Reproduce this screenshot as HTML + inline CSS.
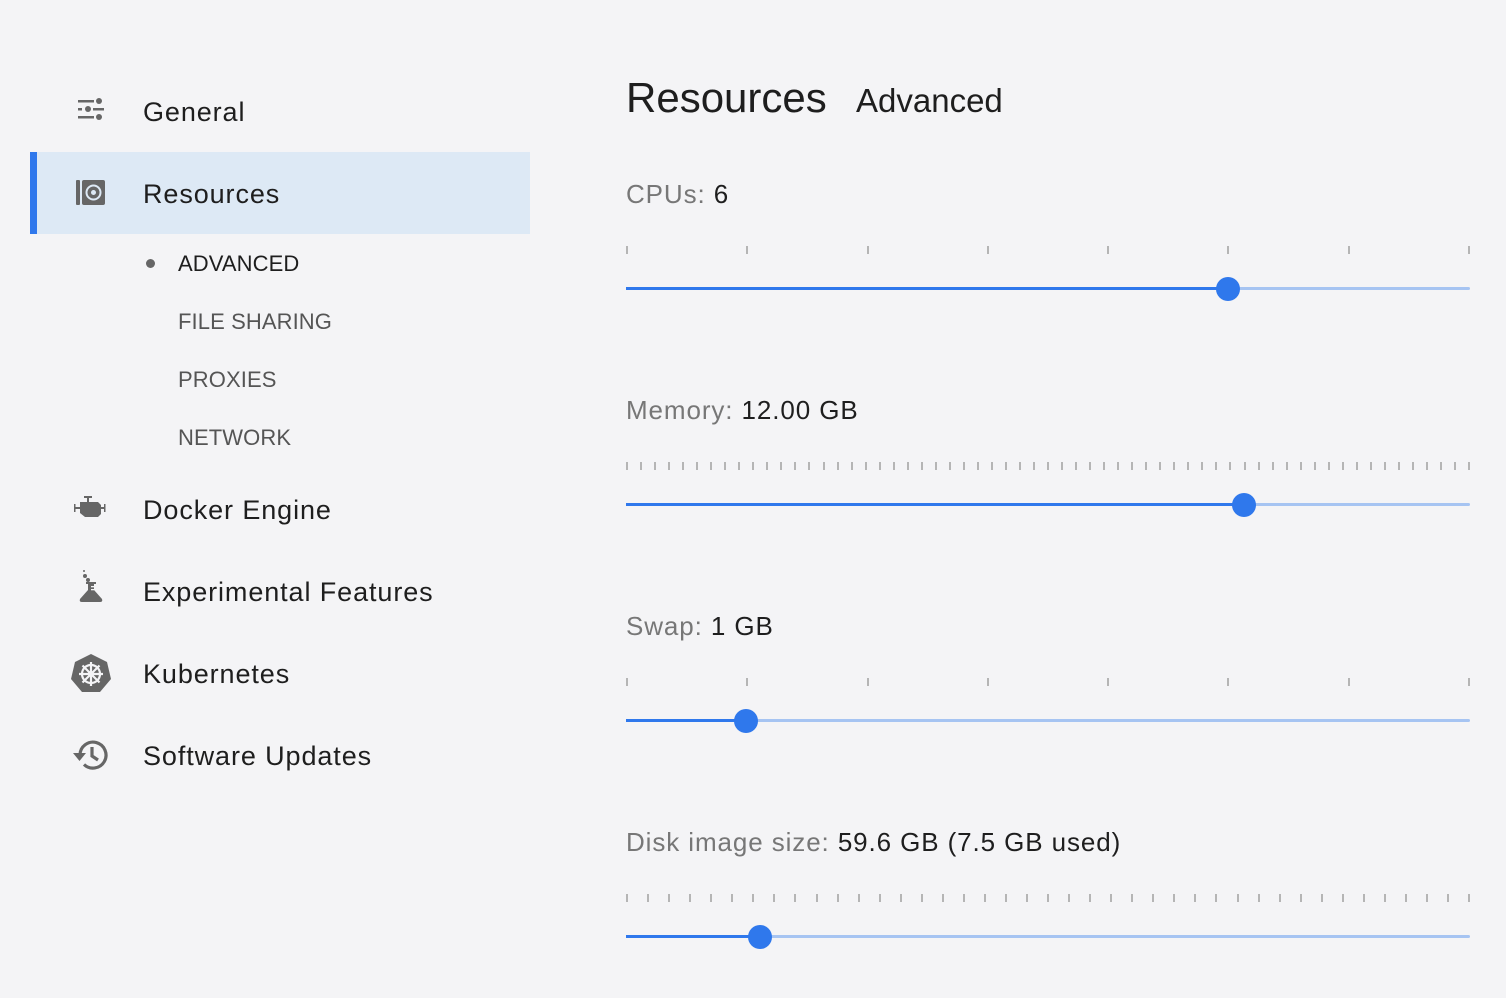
<!DOCTYPE html>
<html><head><meta charset="utf-8"><style>
body{margin:0;width:1506px;height:998px;background:#f4f4f6;font-family:"Liberation Sans",sans-serif;position:relative;overflow:hidden;color:#1e1e1e}
.a{position:absolute;white-space:nowrap}
.nav{font-size:27px;left:143px;letter-spacing:0.9px}
.sub{font-size:22px;left:178px;color:#555;letter-spacing:0.1px}
.lbl{font-size:26px;left:626px;color:#777;letter-spacing:0.9px}
.lbl b{font-weight:normal;color:#1e1e1e}
.trk{position:absolute;left:626px;width:844px;height:3px;background:#a6c4f2;border-radius:2px}
.fill{position:absolute;left:0;top:0;height:3px;background:#2f78ec}
.th{position:absolute;width:24px;height:24px;border-radius:50%;background:#2f78ec;top:-10px;margin-left:-12px}
.tk{position:absolute;width:2px;height:8px;background:#b5b5b5}
svg{position:absolute}
</style></head><body>
<div class="a" style="left:30px;top:152px;width:500px;height:82px;background:#dde9f5"></div>
<div class="a" style="left:30px;top:152px;width:7px;height:82px;background:#2f78ec"></div>

<svg style="left:78px;top:98px" width="28" height="24" viewBox="0 0 28 24"><g fill="#666"><rect x="0" y="2" width="16" height="2.5"/><circle cx="21" cy="3" r="3"/><rect x="0" y="10" width="4" height="2.5"/><circle cx="10" cy="11" r="3"/><rect x="15" y="10" width="11" height="2.5"/><rect x="0" y="18" width="16" height="2.5"/><circle cx="21" cy="19" r="3"/></g></svg>
<div class="a nav" style="top:97px">General</div>

<svg style="left:76px;top:180px" width="30" height="26" viewBox="0 0 30 26"><rect x="0" y="0" width="4" height="25" rx="1" fill="#666"/><rect x="6" y="0" width="23" height="25" rx="2" fill="#666"/><circle cx="17.5" cy="12.5" r="7" fill="none" stroke="#dde9f5" stroke-width="2"/><circle cx="17.5" cy="12.5" r="2.5" fill="#dde9f5"/></svg>
<div class="a nav" style="top:179px">Resources</div>

<div class="a" style="left:146px;top:259px;width:9px;height:9px;border-radius:50%;background:#666"></div>
<div class="a sub" style="top:251px;color:#1e1e1e">ADVANCED</div>
<div class="a sub" style="top:309px">FILE SHARING</div>
<div class="a sub" style="top:367px">PROXIES</div>
<div class="a sub" style="top:425px">NETWORK</div>

<svg style="left:74px;top:496px" width="32" height="24" viewBox="0 0 32 24"><g fill="#666"><rect x="10" y="0" width="8" height="2"/><rect x="13" y="1" width="2" height="5"/><path d="M6 6h18l3 3v9l-3 3H11l-5-4z"/><rect x="0" y="11" width="6" height="2"/><rect x="0" y="8" width="1.5" height="8"/><rect x="27" y="11" width="4" height="2"/><rect x="30" y="8" width="1.5" height="8"/></g></svg>
<div class="a nav" style="top:495px">Docker Engine</div>

<svg style="left:76px;top:568px" width="30" height="36" viewBox="0 0 30 36"><g fill="#666"><circle cx="8" cy="3" r="1"/><circle cx="9" cy="8" r="2"/><circle cx="12" cy="12" r="2"/><path d="M10 14h10v2h-2v6l8 9q1 3-2 3H6q-3 0-2-3l8-9v-6h-2z"/></g><g fill="#f4f4f6"><rect x="15" y="18" width="3" height="1.3"/><rect x="15" y="21" width="3" height="1.3"/></g></svg>
<div class="a nav" style="top:577px">Experimental Features</div>

<svg style="left:69px;top:653px" width="44" height="40" viewBox="0 0 44 40"><path d="M22 1 38 9 42 26 31 39H13L2 26 6 9z" fill="#666"/><g stroke="#f4f4f6" stroke-width="2.2" fill="none"><circle cx="22" cy="21" r="9"/><path d="M22 9v24M10 21h24M13.5 12.5l17 17M30.5 12.5l-17 17"/></g><circle cx="22" cy="21" r="3" fill="#f4f4f6"/></svg>
<div class="a nav" style="top:659px">Kubernetes</div>

<svg style="left:72px;top:738px" width="38" height="34" viewBox="0 0 38 34"><g fill="none" stroke="#666" stroke-width="3.2"><path d="M8 17A13 13 0 1 1 12 26.5"/><path d="M20 9v9l6 4"/></g><path d="M1 15h13l-6.5 8z" fill="#666"/></svg>
<div class="a nav" style="top:741px">Software Updates</div>

<div class="a" style="left:626px;top:74px;font-size:42px">Resources</div>
<div class="a" style="left:856px;top:82px;font-size:33px">Advanced</div>

<div class="a lbl" style="top:179px">CPUs: <b>6</b></div>
<div class="a lbl" style="top:395px">Memory: <b>12.00 GB</b></div>
<div class="a lbl" style="top:611px">Swap: <b>1 GB</b></div>
<div class="a lbl" style="top:827px">Disk image size: <b>59.6 GB (7.5 GB used)</b></div>

<div id="s"></div>
<script>
function mk(y,n,pos){var h='';for(var i=0;i<n;i++){var x=626+i*(842/(n-1));h+='<div class="tk" style="left:'+x.toFixed(1)+'px;top:'+(y-42)+'px"></div>';}
h+='<div class="trk" style="top:'+(y-1)+'px"><div class="fill" style="width:'+(pos-626)+'px"></div><div class="th" style="left:'+(pos-626)+'px"></div></div>';return h;}
document.getElementById('s').innerHTML=mk(288,8,1228)+mk(504,61,1244)+mk(720,8,746)+mk(936,41,760);
</script>
</body></html>
